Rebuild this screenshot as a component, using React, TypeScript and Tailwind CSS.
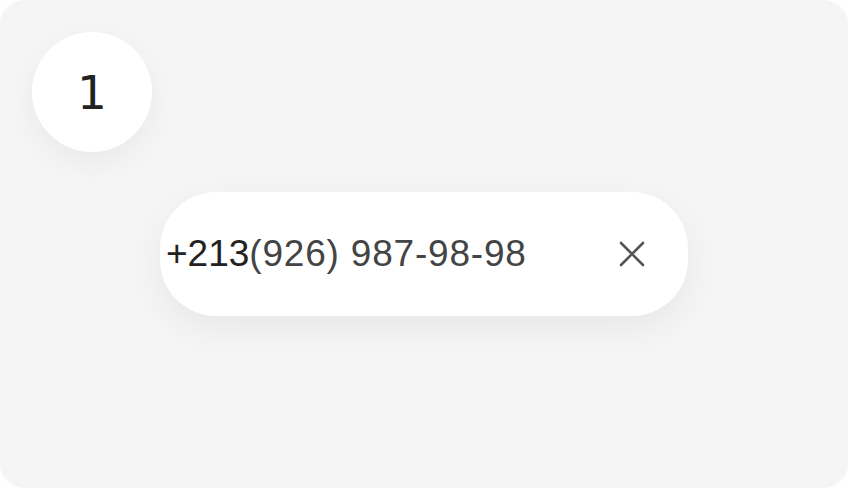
import React from "react";

export default function App() {
  return (
    <div className="w-[848px] h-[488px] bg-white">
      <div className="w-full h-full rounded-[24px] bg-[#f5f5f5] relative">
        <div className="pt-[32px] pl-[32px]">
          <div className="w-[120px] h-[120px] rounded-full bg-white shadow-[0_10px_30px_rgba(0,0,0,0.05)] flex items-center justify-center">
            <span className="text-[47px] leading-none text-[#222] font-['DejaVu_Sans',sans-serif]">1</span>
          </div>
        </div>
        <div className="pl-[160px] pt-[40px]">
          <div className="w-[528px] h-[124px] rounded-[56px] bg-white shadow-[0_12px_36px_rgba(0,0,0,0.06)] flex items-center pl-[6px] pr-[42px]">
            <div className="flex-1 text-[37px] leading-none font-['Liberation_Sans',Arial,sans-serif] pb-[2px]">
              <span className="text-[#222]">+213</span>
              <span className="text-[#444] tracking-[0.8px]">(926) 987-98-98</span>
            </div>
            <svg width="28" height="28" viewBox="0 0 28 28" className="text-[#555]">
              <path d="M3 3 L25 25 M25 3 L3 25" stroke="currentColor" strokeWidth="2.6" strokeLinecap="round" />
            </svg>
          </div>
        </div>
      </div>
    </div>
  );
}
